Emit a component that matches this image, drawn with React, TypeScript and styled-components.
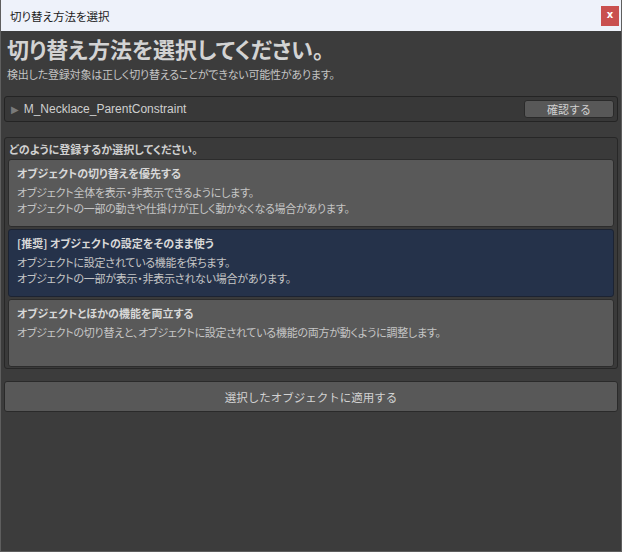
import React from "react"
import styled, { createGlobalStyle } from "styled-components"

const GlobalStyle = createGlobalStyle`
  html, body {
    margin: 0;
    padding: 0;
    background: #2b2b2b;
  }
  body {
    font-family: "Noto Sans CJK JP", "Noto Sans", sans-serif;
    font-feature-settings: "palt" 1;
  }
`

const Window = styled.div`
  width: 622px;
  height: 552px;
  box-sizing: border-box;
  display: flex;
  flex-direction: column;
  background: #3c3c3c;
  border: 1px solid #5e5e5e;
  border-top: none;
`

const TitleBar = styled.div`
  height: 31px;
  flex-shrink: 0;
  display: flex;
  align-items: center;
  justify-content: space-between;
  padding: 0 2px 0 9px;
  background: #eef2fa;
`

const TitleText = styled.span`
  font-size: 11.5px;
  color: #1c1c1c;
`

const CloseButton = styled.div`
  width: 18px;
  height: 20px;
  display: flex;
  align-items: center;
  justify-content: center;
  background: #c9504f;
  color: #ffffff;
  font-family: "DejaVu Sans", sans-serif;
  font-weight: bold;
  font-size: 10px;
  padding-bottom: 2px;
  box-sizing: border-box;
`

const Body = styled.div`
  flex: 1;
  display: flex;
  flex-direction: column;
  padding: 4px 3px 0 3px;
`

const Heading = styled.h1`
  margin: 0 0 0 3px;
  font-size: 22px;
  line-height: 26px;
  font-weight: bold;
  color: #d3d3d3;
`

const Subtitle = styled.p`
  margin: 5px 0 0 3px;
  font-size: 11px;
  line-height: 16px;
  letter-spacing: -0.2px;
  color: #c4c4c4;
`

const TargetBox = styled.div`
  margin-top: 14px;
  height: 26px;
  box-sizing: border-box;
  display: flex;
  align-items: center;
  padding: 0 3px 0 6px;
  background: #383838;
  border: 1px solid #242424;
  border-radius: 3px;
`

const Arrow = styled.span`
  font-size: 10px;
  color: #7a7a7a;
  margin-right: 5px;
  font-family: "DejaVu Sans", sans-serif;
`

const TargetName = styled.span`
  flex: 1;
  font-family: "Liberation Sans", "Noto Sans CJK JP", sans-serif;
  font-size: 12px;
  color: #cfcfcf;
`

const SmallButton = styled.button`
  width: 90px;
  height: 18px;
  padding: 0;
  font-family: inherit;
  font-size: 11px;
  color: #d0d0d0;
  background: #585858;
  border: 1px solid #2a2a2a;
  border-radius: 3px;
`

const GroupBox = styled.div`
  margin-top: 15px;
  display: flex;
  flex-direction: column;
  gap: 2px;
  padding: 3px 3px 1px 3px;
  background: #3a3a3a;
  border: 1px solid #272727;
  border-radius: 3px;
`

const GroupLabel = styled.div`
  font-size: 11px;
  line-height: 16px;
  font-weight: bold;
  color: #d0d0d0;
  margin-left: 1px;
`

const OptionCard = styled.div<{ $selected?: boolean }>`
  height: 68px;
  box-sizing: border-box;
  padding: 5px 8px;
  background: ${({ $selected }) => ($selected ? "#25324a" : "#595959")};
  border: 1px solid ${({ $selected }) => ($selected ? "#1c2332" : "#2c2c2c")};
  border-radius: 3px;
`

const OptionTitle = styled.div`
  font-size: 11px;
  line-height: 16px;
  font-weight: bold;
  color: #d8d8d8;
  margin-bottom: 3px;
`

const OptionLine = styled.div`
  font-size: 11px;
  line-height: 16px;
  letter-spacing: -0.25px;
  color: #c6c6c6;
`

const ApplyButton = styled.button`
  margin-top: 12px;
  height: 31px;
  padding: 0;
  font-family: inherit;
  font-size: 11.5px;
  color: #d2d2d2;
  background: #585858;
  border: 1px solid #2a2a2a;
  border-radius: 3px;
`

const options = [
  {
    title: "オブジェクトの切り替えを優先する",
    lines: [
      "オブジェクト全体を表示・非表示できるようにします。",
      "オブジェクトの一部の動きや仕掛けが正しく動かなくなる場合があります。",
    ],
  },
  {
    title: "[推奨] オブジェクトの設定をそのまま使う",
    lines: [
      "オブジェクトに設定されている機能を保ちます。",
      "オブジェクトの一部が表示・非表示されない場合があります。",
    ],
    selected: true,
  },
  {
    title: "オブジェクトとほかの機能を両立する",
    lines: ["オブジェクトの切り替えと、オブジェクトに設定されている機能の両方が動くように調整します。"],
  },
]

export default function App() {
  return (
    <>
      <GlobalStyle />
      <Window>
        <TitleBar>
          <TitleText>切り替え方法を選択</TitleText>
          <CloseButton>x</CloseButton>
        </TitleBar>
        <Body>
          <Heading>切り替え方法を選択してください。</Heading>
          <Subtitle>検出した登録対象は正しく切り替えることができない可能性があります。</Subtitle>
          <TargetBox>
            <Arrow>▶</Arrow>
            <TargetName>M_Necklace_ParentConstraint</TargetName>
            <SmallButton>確認する</SmallButton>
          </TargetBox>
          <GroupBox>
            <GroupLabel>どのように登録するか選択してください。</GroupLabel>
            {options.map(opt => (
              <OptionCard key={opt.title} $selected={opt.selected}>
                <OptionTitle>{opt.title}</OptionTitle>
                {opt.lines.map(line => (
                  <OptionLine key={line}>{line}</OptionLine>
                ))}
              </OptionCard>
            ))}
          </GroupBox>
          <ApplyButton>選択したオブジェクトに適用する</ApplyButton>
        </Body>
      </Window>
    </>
  )
}
